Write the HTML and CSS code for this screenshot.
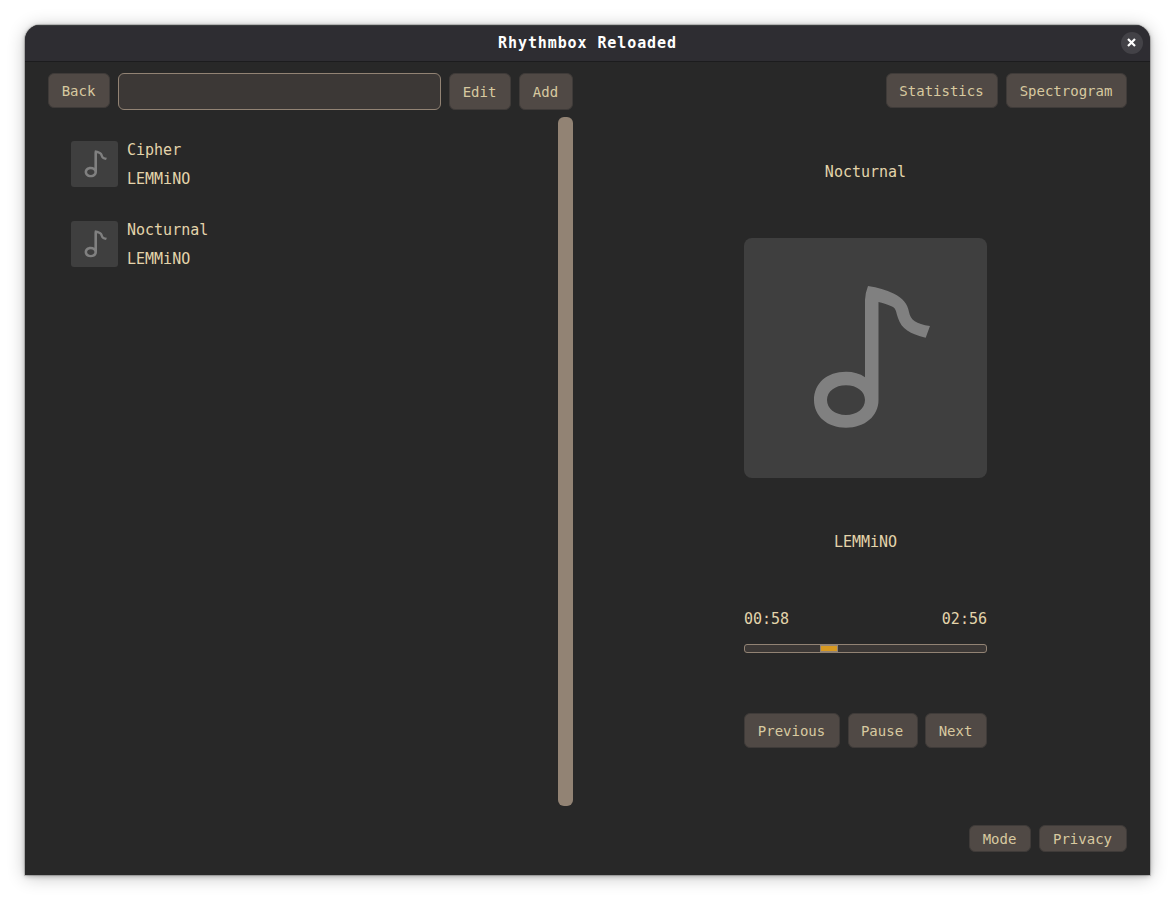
FILE: index.html
```html
<!DOCTYPE html>
<html lang="en">
<head>
<meta charset="utf-8">
<title>Rhythmbox Reloaded</title>
<link rel="stylesheet" href="styles.css">
</head>
<body>
<svg class="defs" width="0" height="0" aria-hidden="true">
  <symbol id="note" viewBox="0 0 243 240">
    <path class="note-shape" fill-rule="evenodd" d="M124 48C134 49.500 142 52 149.500 55.500C159 60 163.500 66 165 74C166.500 82 172 86 186 88L181.700 99.700C166 96 157.500 91 154 80C152 74 152 70 148 68.500C143 66.500 138.500 64.500 134.500 64V162C134.500 178 121 189.700 102 189.700C83 189.700 70 178 70 162C70 145 83 133.700 102 133.700C109.500 133.700 116 135.500 121 139.300V62Q121.500 54 124 48ZM102 147.300C91 147.300 83 153.500 83 162C83 170.500 91 177 102 177C113 177 121 170.500 121 162C121 153.500 113 147.300 102 147.300Z"/>
  </symbol>
</svg>
<div class="window">
  <header class="titlebar">
    <h1 class="title">Rhythmbox Reloaded</h1>
    <button class="close" aria-label="Close">
      <svg width="9" height="9" viewBox="0 0 9 9"><path d="M1 1l7 7M8 1l-7 7"/></svg>
    </button>
  </header>
  <main class="content">
    <section class="library">
      <div class="toolbar">
        <button class="btn back">Back</button>
        <input class="search" type="text" aria-label="Search">
        <button class="btn edit">Edit</button>
        <button class="btn add">Add</button>
      </div>
      <div class="scroller">
        <ul class="tracks">
          <li class="track">
            <svg class="thumb"><use href="#note"/></svg>
            <div class="meta"><span>Cipher</span><span>LEMMiNO</span></div>
          </li>
          <li class="track">
            <svg class="thumb"><use href="#note"/></svg>
            <div class="meta"><span>Nocturnal</span><span>LEMMiNO</span></div>
          </li>
        </ul>
        <div class="scrollbar"></div>
      </div>
    </section>
    <section class="side">
      <div class="views">
        <button class="btn stats">Statistics</button>
        <button class="btn spectro">Spectrogram</button>
      </div>
      <div class="player">
        <div class="song">Nocturnal</div>
        <svg class="cover"><use href="#note"/></svg>
        <div class="artist">LEMMiNO</div>
        <div class="times"><span>00:58</span><span>02:56</span></div>
        <div class="seek"><div class="handle"></div></div>
        <div class="controls">
          <button class="btn prev">Previous</button>
          <button class="btn pause">Pause</button>
          <button class="btn next">Next</button>
        </div>
      </div>
      <div class="footer">
        <button class="btn mode">Mode</button>
        <button class="btn privacy">Privacy</button>
      </div>
    </section>
  </main>
</div>
</body>
</html>
```

FILE: styles.css
```css
* { box-sizing: border-box; }
body {
  margin: 0;
  padding: 25px;
  height: 900px;
  overflow: hidden;
  background: #fff;
  font-family: "DejaVu Sans Mono", "Liberation Mono", monospace;
  font-size: 15px;
  color: #e3d4ab;
}
.defs { display: block; position: absolute; }
.note-shape { fill: #808080; }
.window {
  width: 1125px;
  height: 850px;
  display: flex;
  flex-direction: column;
  background: #282828;
  border-radius: 15px 15px 0 0;
  overflow: hidden;
  box-shadow: 0 0 0 1px rgba(0,0,0,.16), 0 1px 5px rgba(0,0,0,.28), 0 2px 18px rgba(0,0,0,.24);
}
.titlebar {
  flex: none;
  height: 37px;
  display: grid;
  grid-template-columns: 40px 1fr 40px;
  align-items: center;
  background: #2e2d32;
  border-bottom: 1px solid #1c1c1e;
  box-shadow: inset 0 1px #3a3d3e;
}
.title {
  grid-column: 2;
  margin: 0;
  text-align: center;
  font-size: 15px;
  line-height: 20px;
  letter-spacing: .9px;
  color: #fff;
}
.close {
  justify-self: end;
  width: 22px;
  height: 22px;
  margin-right: 7px;
  padding: 0;
  border: 0;
  border-radius: 50%;
  display: grid;
  place-items: center;
  background: #434247;
}
.close svg { margin: 0 1px 1px 0; }
.close path { stroke: #fff; stroke-width: 2.2; fill: none; }
.content {
  flex: 1;
  display: flex;
  justify-content: space-between;
  padding: 11px 23px 23px 23px;
}
.library { width: 525px; display: flex; flex-direction: column; }
.toolbar { display: flex; align-items: flex-start; gap: 8px; height: 44px; }
.btn {
  flex: none;
  height: 35px;
  padding: 0 1px 0 0;
  border: 1px solid #3f3b39;
  border-radius: 6px;
  background: #504945;
  color: #d8c9a0;
  font-family: inherit;
  font-size: 14px;
  text-align: center;
}
.back { width: 62px; }
.search {
  flex: 1;
  min-width: 0;
  height: 37px;
  border: 1px solid #928374;
  border-radius: 6px;
  background: #3c3836;
}
.edit { width: 62px; height: 37px; }
.add { width: 54px; height: 37px; }
.scroller { display: flex; justify-content: space-between; height: 689px; }
.tracks { list-style: none; margin: 0; padding: 24px 0 0 23px; display: grid; gap: 34px; align-content: start; }
.track { display: flex; gap: 9px; height: 46px; }
.thumb { width: 47px; height: 46px; background: #3f3f3f; border-radius: 3px; }
.meta { display: flex; flex-direction: column; gap: 9px; line-height: 20px; margin-top: -1px; }
.scrollbar { width: 15px; background: #928374; border-radius: 6px; }
.side { width: 383px; display: flex; flex-direction: column; align-items: flex-end; }
.views, .footer { display: flex; gap: 8px; }
.stats { width: 112px; }
.spectro { width: 121px; }
.player { width: 243px; margin-right: 140px; }
.song, .artist { text-align: center; line-height: 20px; }
.song { margin-top: 54px; }
.cover { display: block; width: 243px; height: 240px; margin-top: 56px; background: #3f3f3f; border-radius: 8px; }
.artist { margin-top: 54px; }
.times { display: flex; justify-content: space-between; margin-top: 57px; line-height: 20px; }
.seek { height: 9px; margin-top: 15px; border: 1px solid #928374; border-radius: 3px; background: #3c3836; padding-left: 75px; }
.handle { width: 18px; height: 7px; border: 1px solid #928374; background: #d79921; }
.controls { display: flex; justify-content: space-between; margin-top: 60px; }
.prev { width: 96px; }
.pause { width: 70px; }
.next { width: 62px; }
.footer { margin-top: auto; }
.footer .btn { height: 27px; }
.mode { width: 62px; }
.privacy { width: 88px; }
```
